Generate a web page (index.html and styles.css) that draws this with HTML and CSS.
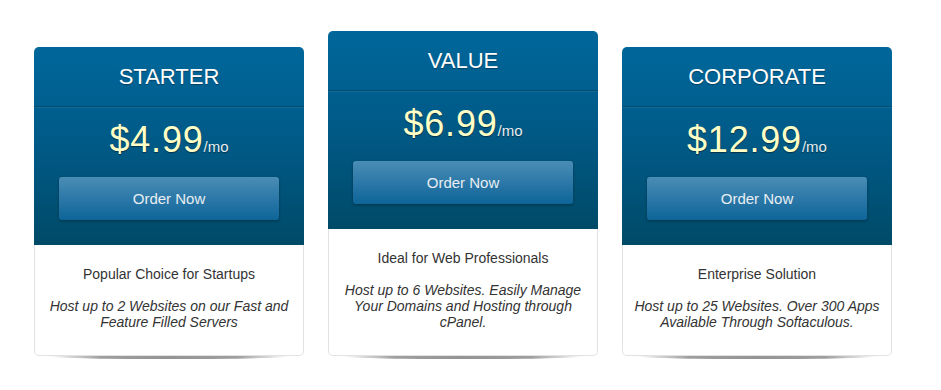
FILE: index.html
```html
<!DOCTYPE html>
<html>
<head>
<meta charset="utf-8">
<link rel="stylesheet" href="styles.css">
</head>
<body>
<div class="plans">
  <div class="card">
    <div class="top">
      <div class="title">STARTER</div>
      <div class="pricing">
        <div class="price">$4.99<span class="per">/mo</span></div>
        <a class="btn" href="#">Order Now</a>
      </div>
    </div>
    <div class="body">
      <p class="tag">Popular Choice for Startups</p>
      <p class="desc">Host up to 2 Websites on our Fast and Feature Filled Servers</p>
    </div>
    <div class="lift"></div>
  </div>
  <div class="card">
    <div class="top">
      <div class="title">VALUE</div>
      <div class="pricing">
        <div class="price">$6.99<span class="per">/mo</span></div>
        <a class="btn" href="#">Order Now</a>
      </div>
    </div>
    <div class="body">
      <p class="tag">Ideal for Web Professionals</p>
      <p class="desc">Host up to 6 Websites. Easily Manage Your Domains and Hosting through cPanel.</p>
    </div>
    <div class="lift"></div>
  </div>
  <div class="card">
    <div class="top">
      <div class="title">CORPORATE</div>
      <div class="pricing">
        <div class="price">$12.99<span class="per">/mo</span></div>
        <a class="btn" href="#">Order Now</a>
      </div>
    </div>
    <div class="body">
      <p class="tag">Enterprise Solution</p>
      <p class="desc">Host up to 25 Websites. Over 300 Apps Available Through Softaculous.</p>
    </div>
    <div class="lift"></div>
  </div>
</div>
</body>
</html>
```
FILE: styles.css
```css
html, body {
  margin: 0;
  padding: 0;
  background: #fff;
}
body {
  font-family: "Liberation Sans", Arial, sans-serif;
}
.plans {
  display: flex;
  align-items: flex-end;
  gap: 24px;
  padding: 31px 0 0 34px;
}
.card {
  display: flex;
  flex-direction: column;
  width: 270px;
  border-radius: 5px;
}
.lift {
  height: 3px;
  margin: 0 14px;
  background: linear-gradient(to right, rgba(0,0,0,0), rgba(0,0,0,0.38) 22%, rgba(0,0,0,0.42) 50%, rgba(0,0,0,0.38) 78%, rgba(0,0,0,0));
  border-radius: 0 0 40% 40% / 0 0 100% 100%;
}
.top {
  border-radius: 5px 5px 0 0;
  background: linear-gradient(to bottom, #00679b 0%, #005f8f 30%, #00557e 65%, #004a67 100%);
  color: #fff;
  text-align: center;
}
.title {
  height: 59px;
  line-height: 59px;
  font-size: 22px;
  border-bottom: 1px solid #004d73;
  text-shadow: 0 1px 1px rgba(0,0,0,0.35);
}
.pricing {
  box-shadow: inset 0 1px 0 rgba(255,255,255,0.07);
  padding: 13px 25px 25px;
  display: flex;
  flex-direction: column;
  align-items: center;
}
.price {
  height: 40px;
  line-height: 40px;
  font-size: 36px;
  letter-spacing: 0.8px;
  color: #ffffc6;
  text-shadow: 0 1px 1px rgba(0,0,0,0.45);
}
.per {
  font-size: 15px;
  letter-spacing: 0;
  color: #e6eef2;
}
.btn {
  display: block;
  margin-top: 17px;
  width: 220px;
  height: 43px;
  line-height: 43px;
  border-radius: 3px;
  background: linear-gradient(to bottom, #4a8db5 0%, #2c78a8 50%, #0d6598 100%);
  box-shadow: 0 1px 3px rgba(0,0,0,0.35);
  color: #e8eef2;
  font-size: 15px;
  text-decoration: none;
}
.body {
  background: #fff;
  border: 1px solid #e2e2e2;
  border-top: none;
  border-radius: 0 0 5px 5px;
  padding: 21px 8px 25px;
  text-align: center;
  color: #333;
  font-size: 14px;
  line-height: 16px;
}
.body p {
  margin: 0;
}
.tag {
  margin-bottom: 16px !important;
}
.desc {
  font-style: italic;
}
```
